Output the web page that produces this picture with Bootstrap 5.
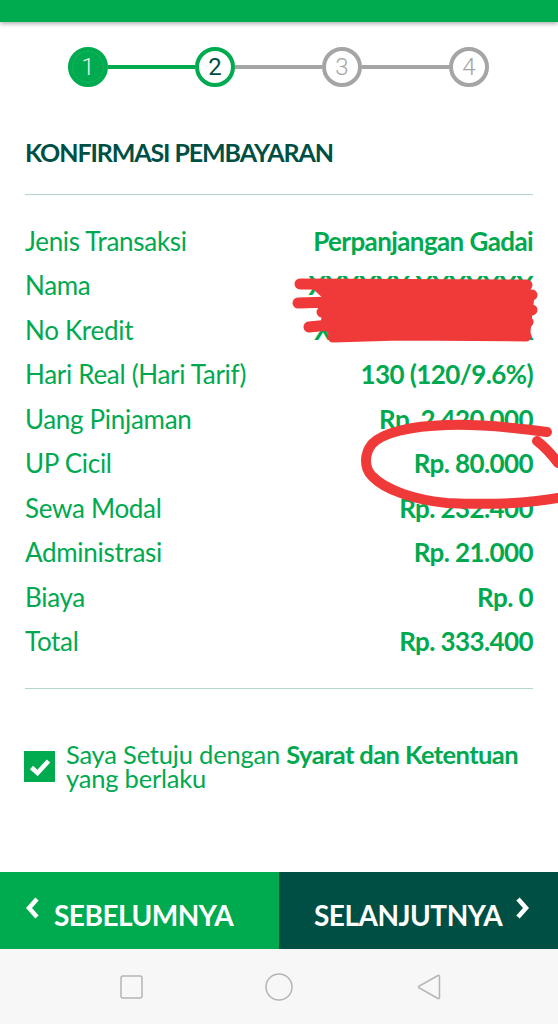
<!DOCTYPE html>
<html lang="id">
<head>
<meta charset="utf-8">
<title>Konfirmasi Pembayaran</title>
<link href="https://cdn.jsdelivr.net/npm/bootstrap@5.3.0/dist/css/bootstrap.min.css" rel="stylesheet">
<style>
html,body{height:100%;}
body{font-family:"Lato","Liberation Sans",sans-serif;background:#fff;color:#00a94f;width:558px;height:1024px;overflow:hidden;position:relative;}
.screen{height:1024px;}
.topbar{height:22px;background:#00aa4f;box-shadow:0 2px 4px rgba(0,0,0,.3);flex:none;}
.stepper{padding:25px 0 0 68px;height:115px;flex:none;align-items:flex-start;}
.stepdot{width:40px;height:40px;border-radius:50%;border:4px solid #a5a5a5;color:#a5a5a5;font-family:Roboto,sans-serif;font-size:24px;font-weight:300;flex:none;background:#fff;}
.stepdot.is-done{background:#00aa4f;border-color:#00aa4f;color:#e4f6eb;box-shadow:inset 0 0 0 1px rgba(255,255,255,.1);}
.stepdot.is-now{border-color:#00aa4f;color:#004f45;font-weight:400;}
.stepline{width:87px;height:4px;background:#a5a5a5;margin-top:18px;flex:none;}
.stepline.is-done{background:#00aa4f;}
.pagetitle{font-size:25px;font-weight:700;color:#004f45;margin:0 25px 27px;line-height:30px;letter-spacing:-1.1px;flex:none;}
.rule{height:1px;background:#b4d6cb;margin:0 25px;flex:none;opacity:1;border:0;}
.datalist{padding:24px 25px 25px;flex:none;}
.datarow{height:44.45px;font-size:26px;line-height:44px;}
.datarow dt{font-weight:400;margin:0;letter-spacing:-.3px;}
.datarow dd{font-weight:700;margin:0;letter-spacing:-.6px;}
.agree{padding:53px 25px 0 24px;gap:11px;flex:none;}
.tick{width:31px;height:31px;background:#00aa4f;flex:none;margin-top:9px;}
.agreetext{font-size:25.5px;line-height:24px;letter-spacing:-.2px;}
.agreetext b{font-weight:700;letter-spacing:-.6px;}
.navbtn{height:77px;flex:1 1 50%;color:#fff;font-size:28px;font-weight:700;letter-spacing:-.5px;border-radius:0;padding:8px 0 0;}
.navbtn.back{background:#00aa4f;padding-left:25px;gap:13px;}
.navbtn.next{background:#004f45;padding-left:35px;gap:12px;}
.chev{margin-top:-14px;flex:none;}
.actionbar{margin-top:auto;flex:none;}
.sysbar{height:75px;background:#f7f7f7;flex:none;padding:0 117px 0 120px;}
.inkmark{position:absolute;left:0;top:0;pointer-events:none;}
</style>
</head>
<body>
<div class="screen d-flex flex-column">
  <div class="topbar"></div>
  <div class="stepper d-flex">
    <div class="stepdot is-done d-flex align-items-center justify-content-center">1</div>
    <div class="stepline is-done"></div>
    <div class="stepdot is-now d-flex align-items-center justify-content-center">2</div>
    <div class="stepline"></div>
    <div class="stepdot d-flex align-items-center justify-content-center">3</div>
    <div class="stepline"></div>
    <div class="stepdot d-flex align-items-center justify-content-center">4</div>
  </div>
  <h1 class="pagetitle">KONFIRMASI PEMBAYARAN</h1>
  <div class="rule"></div>
  <dl class="datalist mb-0">
    <div class="datarow d-flex justify-content-between"><dt>Jenis Transaksi</dt><dd>Perpanjangan Gadai</dd></div>
    <div class="datarow d-flex justify-content-between"><dt>Nama</dt><dd>XXXXXX XXXXXXX</dd></div>
    <div class="datarow d-flex justify-content-between"><dt>No Kredit</dt><dd>XXXXXXXXXXXXX</dd></div>
    <div class="datarow d-flex justify-content-between"><dt>Hari Real (Hari Tarif)</dt><dd>130 (120/9.6%)</dd></div>
    <div class="datarow d-flex justify-content-between"><dt>Uang Pinjaman</dt><dd>Rp. 2.420.000</dd></div>
    <div class="datarow d-flex justify-content-between"><dt>UP Cicil</dt><dd>Rp. 80.000</dd></div>
    <div class="datarow d-flex justify-content-between"><dt>Sewa Modal</dt><dd>Rp. 232.400</dd></div>
    <div class="datarow d-flex justify-content-between"><dt>Administrasi</dt><dd>Rp. 21.000</dd></div>
    <div class="datarow d-flex justify-content-between"><dt>Biaya</dt><dd>Rp. 0</dd></div>
    <div class="datarow d-flex justify-content-between"><dt>Total</dt><dd>Rp. 333.400</dd></div>
  </dl>
  <div class="rule"></div>
  <div class="agree d-flex">
    <div class="tick d-flex align-items-center justify-content-center">
      <svg width="24" height="20" viewBox="0 0 24 20"><path d="M3.500 10.500 9.500 16 20.500 4" fill="none" stroke="#fff" stroke-width="4.600"/></svg>
    </div>
    <div class="agreetext">Saya Setuju dengan <b>Syarat dan Ketentuan</b><br>yang berlaku</div>
  </div>
  <div class="actionbar d-flex">
    <div class="navbtn back d-flex align-items-center">
      <svg class="chev" width="16" height="24" viewBox="0 0 16 24"><path d="M12 3 4 12l8 9" fill="none" stroke="#fff" stroke-width="4.500"/></svg>
      <span>SEBELUMNYA</span>
    </div>
    <div class="navbtn next d-flex align-items-center">
      <span>SELANJUTNYA</span>
      <svg class="chev" width="16" height="24" viewBox="0 0 16 24"><path d="M4 3l8 9-8 9" fill="none" stroke="#fff" stroke-width="4.500"/></svg>
    </div>
  </div>
  <div class="sysbar d-flex align-items-center justify-content-between">
    <svg width="24" height="24" viewBox="0 0 24 24"><rect x="1" y="1" width="21" height="22" rx="2" fill="none" stroke="#b5b5b5" stroke-width="1.500"/></svg>
    <svg class="me-1" width="28" height="28" viewBox="0 0 28 28"><circle cx="14" cy="14" r="13" fill="none" stroke="#b5b5b5" stroke-width="1.500"/></svg>
    <svg width="24" height="28" viewBox="0 0 24 28"><path d="M21 2.500a1 1 0 0 1 1.500 1v21a1 1 0 0 1-1.500 1L2.500 15a1 1 0 0 1 0-2z" fill="none" stroke="#b5b5b5" stroke-width="1.500"/></svg>
  </div>
</div>
<svg class="inkmark" width="558" height="1024" viewBox="0 0 558 1024" fill="none" stroke="#f03a3a" stroke-linecap="round" stroke-linejoin="round">
  <path fill="#f03a3a" stroke="none" d="M304 281 526 280 534 300 530 336 335 341 320 325 325 300z"/>
  <path stroke-width="11" d="M300 284 527 285M298 303 400 300 532 295M322 312 532 310M309 327 400 318 528 322M333 337 400 335 526 336"/>
  <path stroke-width="10" d="M547 432C510 427 475 424 447 425 410 426 382 433 372 444 364 454 364 468 372 476 385 490 415 500 447 503 490 505 530 503 558 498M537 441C545 447 552 455 558 463"/>
</svg>
<script src="https://cdn.jsdelivr.net/npm/bootstrap@5.3.0/dist/js/bootstrap.bundle.min.js"></script>
</body>
</html>
